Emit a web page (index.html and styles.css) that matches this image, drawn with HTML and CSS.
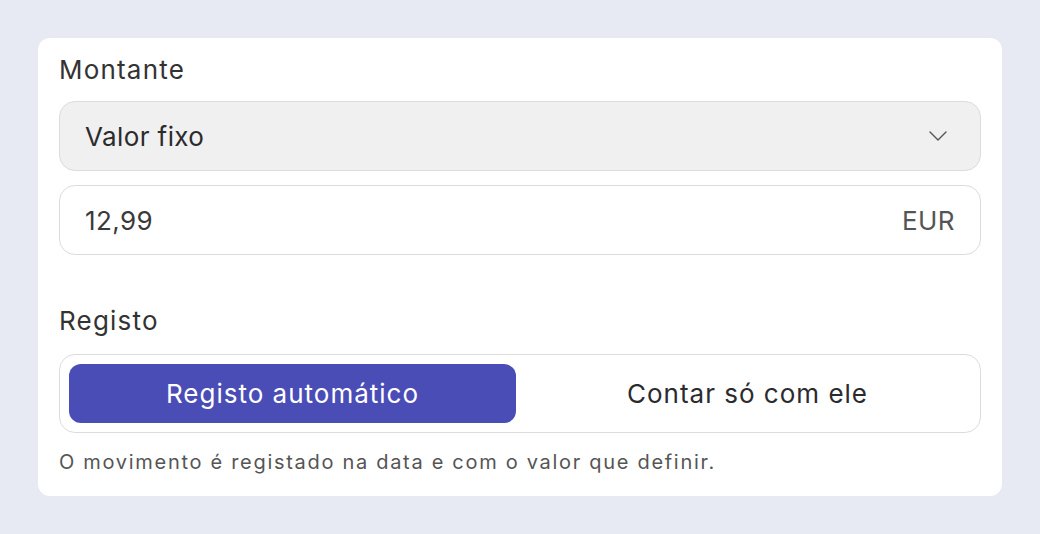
FILE: index.html
```html
<!DOCTYPE html>
<html lang="pt">
<head>
    <meta charset="UTF-8">
    <meta name="viewport" content="width=device-width, initial-scale=1.0">
    <title>Montante</title>
    <link rel="stylesheet" href="styles.css">
</head>
<body>
    <div class="card">
        <!-- Montante -->
        <div class="field-label">Montante</div>
        <div class="select-box">
            <span>Valor fixo</span>
            <svg class="chevron" width="20" height="12" viewBox="0 0 20 12">
                <path d="M2 2 L10 10 L18 2" fill="none" stroke="#555" stroke-width="1.4" stroke-linecap="round" stroke-linejoin="round"/>
            </svg>
        </div>
        <div class="input-box">
            <span>12,99</span>
            <span class="unit">EUR</span>
        </div>

        <!-- Registo -->
        <div class="field-label second">Registo</div>
        <div class="segmented">
            <div class="segment active">Registo automático</div>
            <div class="segment">Contar só com ele</div>
        </div>
        <p class="hint">O movimento é registado na data e com o valor que definir.</p>
    </div>
</body>
</html>
```

FILE: styles.css
```css
body {
    background-color: #e8eaf3;
    font-family: Inter, "Noto Sans", sans-serif;
    margin: 0;
    padding: 38px;
    color: #2b2b2e;
}
.card {
    background-color: white;
    border-radius: 12px;
    padding: 16px 21px 20px;
    height: 422px;
}
.field-label {
    font-size: 26px;
    letter-spacing: 1.2px;
    line-height: 32px;
    color: #333;
    margin-bottom: 15px;
}
.field-label.second {
    margin-top: 50px;
    margin-bottom: 17px;
}
.select-box, .input-box {
    height: 68px;
    border: 1px solid #dcdcdc;
    border-radius: 16px;
    display: flex;
    align-items: center;
    justify-content: space-between;
    padding: 0 25px 0 25px;
    font-size: 26px;
    letter-spacing: 0.4px;
}
.select-box {
    background-color: #f0f0f0;
    margin-bottom: 14px;
    padding-right: 32px;
}
.input-box {
    background-color: white;
    color: #3a3a3a;
}
.unit {
    color: #555;
}
.segmented {
    border: 1px solid #dcdcdc;
    border-radius: 16px;
    padding: 9px;
    display: flex;
    gap: 8px;
}
.segment {
    flex: 1;
    height: 59px;
    border-radius: 12px;
    display: flex;
    justify-content: center;
    align-items: center;
    font-size: 26px;
    letter-spacing: 1px;
    color: #2b2b2e;
}
.segment.active {
    background-color: #4a4db6;
    color: white;
}
.hint {
    margin: 17px 0 0;
    font-size: 20px;
    letter-spacing: 1.7px;
    color: #555;
}
```
